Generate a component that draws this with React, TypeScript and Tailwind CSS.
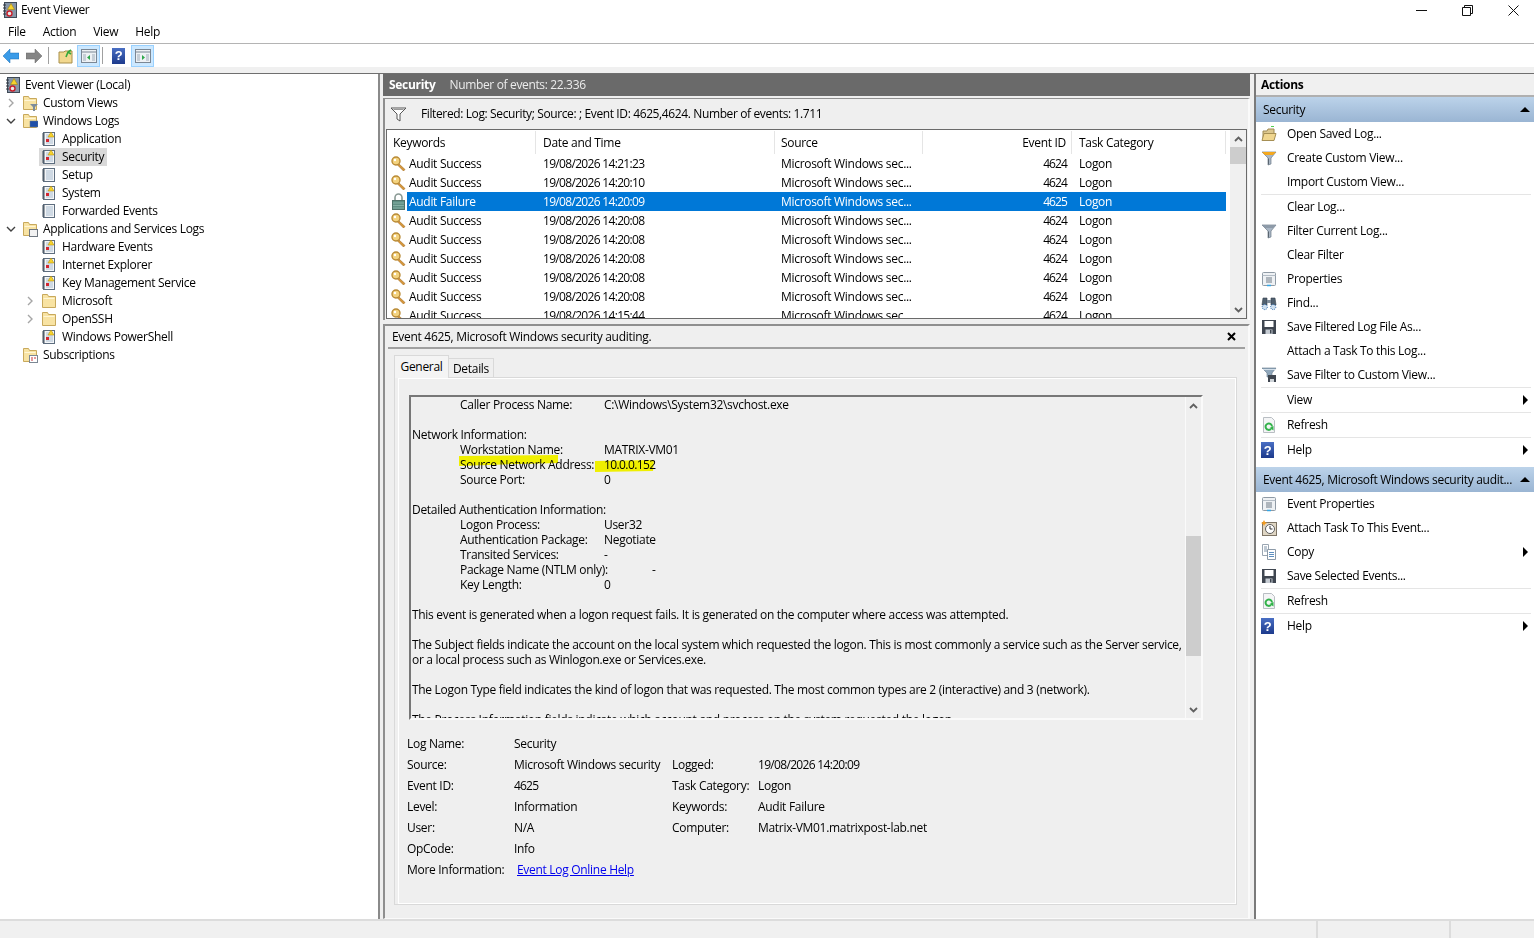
import type { ReactNode } from 'react';

const LogIcon = ({ plain = false }: { plain?: boolean }) => (
  <svg width="16" height="16" viewBox="0 0 16 16" className="shrink-0">
    <rect x="2.5" y="1.5" width="11" height="13" fill="#f4f6f8" stroke="#5d6d7e" />
    <path d="M1 3h3M1 5h3M1 7h3M1 9h3M1 11h3M1 13h3" stroke="#44505c" />
    <path d="M5 4h7M5 6h7M5 8h7M5 10h7M5 12h7" stroke="#a9bccf" />
    {!plain && <path d="M10 1l3 5H7z" fill="#f6d32d" stroke="#b58a00" strokeWidth="0.5" />}
    {!plain && <rect x="5" y="8" width="3" height="3" fill="#d22630" />}
  </svg>
);

const RootIcon = () => (
  <svg width="16" height="16" viewBox="0 0 16 16" className="shrink-0">
    <rect x="2.5" y="0.5" width="12" height="15" fill="#8796a8" stroke="#3f4a57" />
    <path d="M1 3h3M1 6h3M1 9h3M1 12h3" stroke="#2f3741" />
    <path d="M9 1.5l3.5 6h-7z" fill="#f6d32d" stroke="#a37d00" strokeWidth="0.5" />
    <circle cx="7.5" cy="11.5" r="2.5" fill="#e9e9e9" stroke="#c8202c" strokeWidth="1.4" />
  </svg>
);

const FolderIcon = ({ badge }: { badge?: ReactNode }) => (
  <svg width="16" height="16" viewBox="0 0 16 16" className="shrink-0">
    <path d="M1.5 14.5v-13h5l1 2h7v11z" fill="#f8e3a3" stroke="#c8a95c" />
    <path d="M2.5 5.5h11" stroke="#fff6d6" />
    {badge}
  </svg>
);

const Chevron = ({ open }: { open?: boolean }) =>
  open ? (
    <svg width="10" height="10" viewBox="0 0 10 10" className="shrink-0">
      <path d="M1 3l4 4 4-4" fill="none" stroke="#404040" strokeWidth="1.4" />
    </svg>
  ) : (
    <svg width="10" height="10" viewBox="0 0 10 10" className="shrink-0">
      <path d="M3 1l4 4-4 4" fill="none" stroke="#a6a6a6" strokeWidth="1.4" />
    </svg>
  );

const KeyIcon = () => (
  <svg width="17" height="17" viewBox="0 0 17 17" className="shrink-0">
    <path d="M8 8l7 6.5-1.5 1.5L7 9.5z" fill="#d8973a" stroke="#a06a1c" strokeWidth="0.6" />
    <circle cx="6" cy="6" r="4" fill="#f3d27e" stroke="#b98a35" strokeWidth="1.4" />
    <circle cx="5" cy="5" r="1.2" fill="#fff" />
  </svg>
);

const LockIcon = () => (
  <svg width="17" height="17" viewBox="0 0 17 17" className="shrink-0">
    <path d="M5 8V4.5a3.5 3.5 0 0 1 7 0V8" fill="none" stroke="#8a9a95" strokeWidth="1.6" />
    <rect x="2.5" y="7.5" width="12" height="9" fill="#5f8f83" stroke="#4f7168" />
    <path d="M3 10h11M3 12.5h11M3 15h11" stroke="#86b0a5" />
  </svg>
);

const Funnel = ({ top = '#8d9aa8' }: { top?: string }) => (
  <svg width="16" height="16" viewBox="0 0 16 16" className="shrink-0">
    <path d="M1 2h14L10 8v6l-3 1V8z" fill="#a9b6c4" stroke="#6d7b89" strokeWidth="0.7" />
    <path d="M1 2h14l-3 3H4z" fill={top} />
    <path d="M7.5 8.5v6" stroke="#59646f" />
  </svg>
);

const FilterOutline = () => (
  <svg width="17" height="15" viewBox="0 0 17 15">
    <path d="M1 1h15l-6 6v7l-3-2V7z" fill="#fff" stroke="#555" />
    <path d="M3.5 2.5h10" stroke="#999" />
  </svg>
);

const PropertiesIcon = () => (
  <svg width="16" height="16" viewBox="0 0 16 16" className="shrink-0">
    <rect x="1.5" y="1.5" width="13" height="13" rx="1" fill="#eef1f4" stroke="#8f9aa5" />
    <path d="M1.5 4.5h13" stroke="#b3bcc5" />
    <path d="M5 7h6M5 9h6M5 11h6" stroke="#6f7a86" />
    <path d="M6 14.5h4" stroke="#32a6e6" strokeWidth="1.5" />
  </svg>
);

const BinocularsIcon = () => (
  <svg width="16" height="16" viewBox="0 0 16 16" className="shrink-0">
    <path d="M1 10l1-7h4v7zM10 3h4l1 7h-5z" fill="#50606f" stroke="#333e49" strokeWidth="0.6" />
    <path d="M6 5h4v3H6z" fill="#7f8d9a" />
    <circle cx="3.8" cy="12" r="2.6" fill="#cfe0f0" stroke="#2b6aad" strokeDasharray="1 1" />
    <circle cx="12.2" cy="12" r="2.6" fill="#cfe0f0" stroke="#2b6aad" strokeDasharray="1 1" />
  </svg>
);

const FloppyIcon = () => (
  <svg width="16" height="16" viewBox="0 0 16 16" className="shrink-0">
    <path d="M1 1h14v14H1z" fill="#3f4650" />
    <rect x="3.5" y="2" width="9" height="6" fill="#fff" />
    <rect x="4.5" y="10.5" width="7" height="4.5" fill="#c6ccd3" />
    <rect x="9" y="11" width="1.5" height="3.5" fill="#3f4650" />
  </svg>
);

const SaveFilterIcon = () => (
  <svg width="16" height="16" viewBox="0 0 16 16" className="shrink-0">
    <path d="M1 1h14l-4 5v4H6V6z" fill="#8fa6ba" stroke="#64788b" strokeWidth="0.6" />
    <path d="M2 2.5h12" stroke="#d4e0ea" />
    <rect x="7" y="8" width="8" height="7" fill="#3f4650" />
    <rect x="9" y="12" width="4" height="3" fill="#ced3d8" />
  </svg>
);

const RefreshIcon = () => (
  <svg width="16" height="16" viewBox="0 0 16 16" className="shrink-0">
    <path d="M2.5 0.5h8l3 3v12h-11z" fill="#f4f5f6" stroke="#b9bec3" />
    <path d="M11 9.5A3.2 3.2 0 1 0 10 12" fill="none" stroke="#32b24a" strokeWidth="2" />
    <path d="M8.5 11l4 2.5V9z" fill="#32b24a" />
  </svg>
);

const HelpIcon = () => (
  <span className="flex h-[16px] w-[13px] shrink-0 items-center justify-center bg-gradient-to-b from-[#4a6fc4] to-[#1d3a8c] font-['Liberation_Sans',sans-serif] text-[13px] font-bold leading-none text-white">
    ?
  </span>
);

const OpenFolderIcon = () => (
  <svg width="16" height="16" viewBox="0 0 16 16" className="shrink-0">
    <path d="M10 0.5h3" stroke="#4fd04f" />
    <path d="M2 14V5h4l1-2h6v4" fill="#dcc78e" stroke="#9e8a55" />
    <path d="M1 14.5l2-7h12l-2 7z" fill="#f0d68f" stroke="#a68f54" />
  </svg>
);

const TaskIcon = () => (
  <svg width="16" height="16" viewBox="0 0 16 16" className="shrink-0">
    <rect x="1.5" y="2.5" width="14" height="13" fill="#dfd6c4" stroke="#7e7566" />
    <circle cx="9" cy="9" r="4.5" fill="#fff" stroke="#5e5e5e" />
    <path d="M9 6v3h2.5" fill="none" stroke="#333" />
    <path d="M3 0l1 2 2 1-2 1-1 2-1-2-2-1 2-1z" fill="#f29a1f" />
  </svg>
);

const CopyIcon = () => (
  <svg width="16" height="16" viewBox="0 0 16 16" className="shrink-0">
    <path d="M1.5 0.5h6v11h-6z" fill="#fff" stroke="#9aa6b2" />
    <path d="M3 3h3M3 5h3M3 7h3" stroke="#7f93a8" />
    <path d="M6.5 5.5h8v10h-8z" fill="#fff" stroke="#8c9aa8" />
    <path d="M8 8.5h5M8 10.5h5M8 12.5h5" stroke="#5e8fc0" />
  </svg>
);

const ScrollChevron = ({ down }: { down?: boolean }) => (
  <svg width="9" height="6" viewBox="0 0 9 6">
    <path d={down ? 'M1 1l3.5 3.5L8 1' : 'M1 5l3.5-3.5L8 5'} fill="none" stroke="#606060" strokeWidth="1.8" />
  </svg>
);

const PaneToggle = ({ arrow, d }: { arrow: string; d: string }) => (
  <span className="flex h-[22px] w-[23px] items-center justify-center border border-[#99d1ff] bg-[#cce8ff]">
    <svg width="16" height="14" viewBox="0 0 16 14">
      <rect x="0.5" y="0.5" width="15" height="13" fill="#eef1f4" stroke="#7b8794" />
      <path d="M0.5 3h15" stroke="#7b8794" />
      <path d="M2 5h3v7H2zM11 5h3v7h-3z" fill="#c6ced6" />
      <path d={d} fill={arrow} />
    </svg>
  </span>
);

const treeRows = [
  { label: 'Custom Views', depth: 1, chev: 'closed', icon: 'filter' },
  { label: 'Windows Logs', depth: 1, chev: 'open', icon: 'monitor' },
  { label: 'Application', depth: 2, icon: 'log' },
  { label: 'Security', depth: 2, icon: 'log', selected: true },
  { label: 'Setup', depth: 2, icon: 'plain' },
  { label: 'System', depth: 2, icon: 'log' },
  { label: 'Forwarded Events', depth: 2, icon: 'plain' },
  { label: 'Applications and Services Logs', depth: 1, chev: 'open', icon: 'apps' },
  { label: 'Hardware Events', depth: 2, icon: 'log' },
  { label: 'Internet Explorer', depth: 2, icon: 'log' },
  { label: 'Key Management Service', depth: 2, icon: 'log' },
  { label: 'Microsoft', depth: 2, chev: 'closed', icon: 'folder' },
  { label: 'OpenSSH', depth: 2, chev: 'closed', icon: 'folder' },
  { label: 'Windows PowerShell', depth: 2, icon: 'log' },
  { label: 'Subscriptions', depth: 1, icon: 'subs' },
];

function treeIcon(kind: string) {
  if (kind === 'log') return <LogIcon />;
  if (kind === 'plain') return <LogIcon plain />;
  if (kind === 'folder') return <FolderIcon />;
  if (kind === 'filter') return <FolderIcon badge={<path d="M8 9h8l-3 3v4h-2v-4z" fill="#7d8c9b" />} />;
  if (kind === 'monitor') return <FolderIcon badge={<path d="M8 8h8v6H8z" fill="#1f4fa8" stroke="#6a7a8a" strokeWidth="0.5" />} />;
  if (kind === 'apps') return <FolderIcon badge={<rect x="7.5" y="8.5" width="8" height="7" fill="#f2f2f2" stroke="#6f7780" />} />;
  return <FolderIcon badge={<g><rect x="7.5" y="8.5" width="8" height="7" fill="#fff" stroke="#7c8894" /><path d="M9 11h2M12 11h2M9 13h2" stroke="#c8343a" /></g>} />;
}

const events = [
  ['Audit Success', '19/08/2026 14:21:23', '4624'],
  ['Audit Success', '19/08/2026 14:20:10', '4624'],
  ['Audit Failure', '19/08/2026 14:20:09', '4625'],
  ['Audit Success', '19/08/2026 14:20:08', '4624'],
  ['Audit Success', '19/08/2026 14:20:08', '4624'],
  ['Audit Success', '19/08/2026 14:20:08', '4624'],
  ['Audit Success', '19/08/2026 14:20:08', '4624'],
  ['Audit Success', '19/08/2026 14:20:08', '4624'],
  ['Audit Success', '19/08/2026 14:15:44', '4624'],
];

type Line = { text?: string; label?: string; value?: string; wide?: boolean };

const detailLines: Line[] = [
  { label: 'Caller Process Name:', value: 'C:\\Windows\\System32\\svchost.exe' },
  {},
  { text: 'Network Information:' },
  { label: 'Workstation Name:', value: 'MATRIX-VM01' },
  { label: 'Source Network Address:', value: '10.0.0.152' },
  { label: 'Source Port:', value: '0' },
  {},
  { text: 'Detailed Authentication Information:' },
  { label: 'Logon Process:', value: 'User32' },
  { label: 'Authentication Package:', value: 'Negotiate' },
  { label: 'Transited Services:', value: '-' },
  { label: 'Package Name (NTLM only):', value: '-', wide: true },
  { label: 'Key Length:', value: '0' },
  {},
  { text: 'This event is generated when a logon request fails. It is generated on the computer where access was attempted.' },
  {},
  { text: 'The Subject fields indicate the account on the local system which requested the logon. This is most commonly a service such as the Server service,' },
  { text: 'or a local process such as Winlogon.exe or Services.exe.' },
  {},
  { text: 'The Logon Type field indicates the kind of logon that was requested. The most common types are 2 (interactive) and 3 (network).' },
  {},
  { text: 'The Process Information fields indicate which account and process on the system requested the logon.' },
];

const metaRows = [
  ['Log Name:', 'Security', '', ''],
  ['Source:', 'Microsoft Windows security', 'Logged:', '19/08/2026 14:20:09'],
  ['Event ID:', '4625', 'Task Category:', 'Logon'],
  ['Level:', 'Information', 'Keywords:', 'Audit Failure'],
  ['User:', 'N/A', 'Computer:', 'Matrix-VM01.matrixpost-lab.net'],
  ['OpCode:', 'Info', '', ''],
];

type Action = { label: string; icon?: ReactNode; arrow?: boolean; sep?: boolean };

const securityActions: Action[] = [
  { label: 'Open Saved Log...', icon: <OpenFolderIcon /> },
  { label: 'Create Custom View...', icon: <Funnel top="#f5a81c" /> },
  { label: 'Import Custom View...', sep: true },
  { label: 'Clear Log...' },
  { label: 'Filter Current Log...', icon: <Funnel /> },
  { label: 'Clear Filter' },
  { label: 'Properties', icon: <PropertiesIcon /> },
  { label: 'Find...', icon: <BinocularsIcon /> },
  { label: 'Save Filtered Log File As...', icon: <FloppyIcon /> },
  { label: 'Attach a Task To this Log...' },
  { label: 'Save Filter to Custom View...', icon: <SaveFilterIcon />, sep: true },
  { label: 'View', arrow: true, sep: true },
  { label: 'Refresh', icon: <RefreshIcon />, sep: true },
  { label: 'Help', icon: <HelpIcon />, arrow: true },
];

const eventActions: Action[] = [
  { label: 'Event Properties', icon: <PropertiesIcon /> },
  { label: 'Attach Task To This Event...', icon: <TaskIcon /> },
  { label: 'Copy', icon: <CopyIcon />, arrow: true },
  { label: 'Save Selected Events...', icon: <FloppyIcon />, sep: true },
  { label: 'Refresh', icon: <RefreshIcon />, sep: true },
  { label: 'Help', icon: <HelpIcon />, arrow: true },
];

function ActionHeader({ title }: { title: string }) {
  return (
    <div className="flex h-[25px] shrink-0 items-center justify-between bg-gradient-to-b from-[#bcd3ea] to-[#9ab5d3] pl-[7px] pr-[4px]">
      <span>{title}</span>
      <span className="h-0 w-0 border-x-[5px] border-b-[5px] border-x-transparent border-b-black" />
    </div>
  );
}

function ActionList({ items }: { items: Action[] }) {
  return (
    <div>
      {items.map((a, i) => (
        <div key={i}>
          <div className="flex h-[24px] items-center pl-[5px] pr-[6px]">
            <span className="flex w-[26px] shrink-0 items-center">{a.icon}</span>
            <span className="flex-1">{a.label}</span>
            {a.arrow && <span className="h-0 w-0 border-y-[5px] border-l-[5px] border-y-transparent border-l-black" />}
          </div>
          {a.sep && <div className="ml-[5px] mr-[3px] h-px bg-[#e5e5e5]" />}
        </div>
      ))}
    </div>
  );
}

export default function App() {
  return (
    <div className="flex h-[938px] w-[1534px] flex-col overflow-hidden bg-white font-['Open_Sans',sans-serif] text-[12px] tracking-[-0.3px] text-black">
      {/* title bar */}
      <div className="flex h-[21px] shrink-0 items-center pb-px pl-[2px]">
        <RootIcon />
        <span className="ml-[3px] flex-1">Event Viewer</span>
        <svg width="11" height="1" className="mr-[35px]"><rect width="11" height="1" fill="#111" /></svg>
        <svg width="11" height="11" viewBox="0 0 11 11" className="mr-[35px]">
          <path d="M0.5 2.5h8v8h-8zM2.5 2.5v-2h8v8h-2" fill="none" stroke="#111" />
        </svg>
        <svg width="11" height="11" viewBox="0 0 11 11" className="mr-[15px]">
          <path d="M0.5 0.5l10 10M10.5 0.5l-10 10" stroke="#111" />
        </svg>
      </div>

      {/* menu */}
      <div className="flex h-[23px] shrink-0 items-center gap-[17px] border-b border-[#b4b4b4] pl-[8px]">
        <span>File</span>
        <span>Action</span>
        <span>View</span>
        <span>Help</span>
      </div>

      {/* toolbar */}
      <div className="flex h-[23px] shrink-0 items-center pl-[3px]">
        <svg width="16" height="14" viewBox="0 0 16 14">
          <path d="M0 7l7-7v4h9v6H7v4z" fill="#3a9be8" stroke="#1b6db5" strokeWidth="0.5" />
        </svg>
        <svg width="16" height="14" viewBox="0 0 16 14" className="ml-[7px]">
          <path d="M16 7L9 0v4H0v6h9v4z" fill="#858585" stroke="#666" strokeWidth="0.5" />
        </svg>
        <span className="ml-[6px] h-[17px] w-px bg-[#a0a0a0]" />
        <span className="ml-[9px]">
          <svg width="16" height="16" viewBox="0 0 16 16" className="block">
            <path d="M1 15V4h5l1-1h7v12z" fill="#f2d88f" stroke="#a88f4b" />
            <path d="M8 9l2-5 3-2M10 4l3 2" fill="none" stroke="#35a83a" strokeWidth="1.6" />
          </svg>
        </span>
        <span className="ml-[3px]"><PaneToggle arrow="#2fa84a" d="M9 6v5L6 8.5z" /></span>
        <span className="ml-[2px] h-[17px] w-px bg-[#a0a0a0]" />
        <span className="ml-[9px]"><HelpIcon /></span>
        <span className="ml-[6px]"><PaneToggle arrow="#2fa84a" d="M7 6v5l3-2.5z" /></span>
      </div>
      <div className="h-[7px] shrink-0 border-b border-[#6f6f6f] bg-[#f0f0f0]" />

      <div className="flex min-h-0 flex-1">
        {/* tree */}
        <div className="w-[380px] shrink-0 border-r-2 border-[#8a8a8a] pl-[4px] pt-[2px]">
          <div className="flex h-[18px] items-center gap-[4px] pl-px">
            <RootIcon />
            <span>Event Viewer (Local)</span>
          </div>
          {treeRows.map((r) => (
            <div key={r.label} className={`flex h-[18px] items-center ${r.depth === 1 ? 'pl-0' : 'pl-[19px]'}`}>
              <span className="flex w-[16px] shrink-0 justify-start pl-[2px]">
                {r.chev && <Chevron open={r.chev === 'open'} />}
              </span>
              <span className={`flex h-[18px] items-center pl-[2px] pr-[3px] ${r.selected ? 'bg-[#d9d9d9]' : ''}`}>
                {treeIcon(r.icon)}
                <span className="ml-[5px]">{r.label}</span>
              </span>
            </div>
          ))}
        </div>

        {/* center */}
        <div className="flex w-[874px] shrink-0 flex-col bg-[#efefef] pl-[3px] pr-[4px]">
          <div className="flex h-[22px] shrink-0 items-center bg-[#6a6a6a] pl-[6px] text-white">
            <span className="font-bold">Security</span>
            <span className="ml-[14px] tracking-[-0.35px] text-[#ececec]">Number of events: 22.336</span>
          </div>

          <div className="mt-[2px] flex h-[222px] shrink-0 flex-col border-l-2 border-r-2 border-t border-[#8f8f8f] border-r-[#fafafa] pl-px pr-px">
            <div className="flex h-[30px] shrink-0 items-center pl-[4px]">
              <FilterOutline />
              <span className="ml-[14px] tracking-[-0.38px]">Filtered: Log: Security; Source: ; Event ID: 4625,4624. Number of events: 1.711</span>
            </div>
            <div className="flex h-[190px] shrink-0 overflow-hidden border border-[#6a6a6a] bg-white">
              <div className="w-[840px] shrink-0 pt-px">
                <div className="flex h-[23px] items-center">
                  <span className="h-[23px] w-[149px] border-r border-[#e5e5e5] pl-[6px] leading-[23px]">Keywords</span>
                  <span className="h-[23px] w-[239px] border-r border-[#e5e5e5] pl-[7px] leading-[23px]">Date and Time</span>
                  <span className="h-[23px] w-[148px] border-r border-[#e5e5e5] pl-[6px] leading-[23px]">Source</span>
                  <span className="h-[23px] w-[149px] border-r border-[#e5e5e5] pr-[5px] text-right leading-[23px]">Event ID</span>
                  <span className="h-[23px] w-[154px] border-r border-[#e5e5e5] pl-[7px] leading-[23px]">Task Category</span>
                </div>
                {events.map((e, i) => {
                  const selected = i === 2;
                  return (
                    <div key={i} className="flex h-[19px] items-center">
                      <span className="flex w-[20px] shrink-0 justify-center pl-[2px]">
                        {selected ? <LockIcon /> : <KeyIcon />}
                      </span>
                      <div className={`flex h-[19px] w-[819px] items-center ${selected ? 'bg-[#0078d7] text-white' : ''}`}>
                        <span className="w-[129px] shrink-0 pl-[2px]">{e[0]}</span>
                        <span className="w-[239px] shrink-0 pl-[7px] tracking-[-0.68px]">{e[1]}</span>
                        <span className="w-[148px] shrink-0 pl-[6px]">Microsoft Windows sec...</span>
                        <span className="w-[149px] shrink-0 pr-[5px] text-right tracking-[-0.9px]">{e[2]}</span>
                        <span className="w-[154px] shrink-0 pl-[7px]">Logon</span>
                      </div>
                    </div>
                  );
                })}
              </div>
              <div className="ml-[3px] flex w-[16px] shrink-0 flex-col items-center bg-[#f0f0f0]">
                <div className="flex h-[17px] w-full items-center justify-center"><ScrollChevron /></div>
                <div className="h-[17px] w-full bg-[#cdcdcd]" />
                <div className="flex-1" />
                <div className="flex h-[17px] w-full items-center justify-center"><ScrollChevron down /></div>
              </div>
            </div>
          </div>

          <div className="mt-[4px] flex min-h-0 flex-1 flex-col border-b border-l-2 border-r-2 border-t-2 border-[#8f8f8f] border-b-[#fafafa] border-r-[#fafafa] pl-[3px] pr-[3px]">
            <div className="flex h-[23px] shrink-0 items-center justify-between border-b-2 border-[#a0a0a0] pl-[4px] pr-[9px]">
              <span>Event 4625, Microsoft Windows security auditing.</span>
              <svg width="9" height="9" viewBox="0 0 9 9"><path d="M1 1l7 7M8 1l-7 7" stroke="#000" strokeWidth="2" /></svg>
            </div>

            <div className="mt-[4px] flex h-[25px] shrink-0 items-end pl-[6px]">
              <span className="z-10 flex h-[23px] w-[55px] items-center justify-center border border-b-0 border-[#d9d9d9] bg-[#f4f4f4] pb-px">General</span>
              <span className="flex h-[20px] w-[45px] items-center justify-center border border-b-0 border-l-0 border-[#d9d9d9]">Details</span>
            </div>

            <div className="-mt-px ml-[6px] mr-[8px] h-[528px] shrink-0 border border-[#d9d9d9] pl-[3px]">
              <div className="h-full border border-white">
                <div className="relative ml-[10px] mt-[16px] h-[325px] w-[794px] overflow-hidden border-2 border-[#fafafa] border-l-[#777] border-t-[#777]">
                  <svg width="260" height="30" className="absolute left-[48px] top-[54px] mix-blend-multiply">
                    <path d="M0 5L99 4L99 12L60 13L0 15zM136 10L195 9L194 20L136 21z" fill="#ffff00" />
                  </svg>
                  <div className="absolute bottom-0 right-0 top-0 flex w-[16px] flex-col border-l border-[#fafafa]">
                    <div className="flex h-[17px] items-center justify-center"><ScrollChevron /></div>
                    <div className="mt-[122px] h-[120px] bg-[#cdcdcd]" />
                    <div className="flex-1" />
                    <div className="flex h-[17px] items-center justify-center"><ScrollChevron down /></div>
                  </div>
                  <div className="relative pl-[1px]">
                    {detailLines.map((l, i) => (
                      <div key={i} className="flex h-[15px] items-center whitespace-nowrap leading-[15px]">
                        {l.text !== undefined ? (
                          <span>{l.text}</span>
                        ) : l.label ? (
                          <>
                            <span className="ml-[48px] w-[144px] shrink-0">{l.label}</span>
                            <span className={l.wide ? 'ml-[48px]' : l.value === '10.0.0.152' ? 'tracking-[-0.6px]' : ''}>{l.value}</span>
                          </>
                        ) : null}
                      </div>
                    ))}
                  </div>
                </div>

                <div className="ml-[8px] mt-[13px]">
                  {metaRows.map((m) => (
                    <div key={m[0]} className="flex h-[21px] items-center">
                      <span className="w-[107px] shrink-0">{m[0]}</span>
                      <span className={`w-[158px] shrink-0 ${m[0] === 'Event ID:' ? 'tracking-[-0.8px]' : ''}`}>{m[1]}</span>
                      <span className="w-[86px] shrink-0">{m[2]}</span>
                      <span className={m[2] === 'Logged:' ? 'tracking-[-0.68px]' : ''}>{m[3]}</span>
                    </div>
                  ))}
                  <div className="flex h-[21px] items-center">
                    <span className="w-[110px] shrink-0">More Information:</span>
                    <span className="text-[#0000ee] underline">Event Log Online Help</span>
                  </div>
                </div>
              </div>
            </div>
          </div>
        </div>

        {/* actions */}
        <div className="flex-1 border-l-2 border-[#7a7a7a]">
          <div className="flex h-[23px] items-center border-b-2 border-[#b0b0b0] bg-[#f0f0f0] pl-[5px] pt-px font-bold">Actions</div>
          <ActionHeader title="Security" />
          <ActionList items={securityActions} />
          <div className="mt-[5px]">
            <ActionHeader title="Event 4625, Microsoft Windows security audit..." />
            <ActionList items={eventActions} />
          </div>
        </div>
      </div>

      {/* status bar */}
      <div className="flex h-[19px] shrink-0 border-t-2 border-[#dcdcdc] bg-[#f0f0f0]">
        <span className="w-[1318px] border-r-2 border-[#dcdcdc]" />
        <span className="w-[133px] border-r-2 border-[#dcdcdc]" />
      </div>
    </div>
  );
}
